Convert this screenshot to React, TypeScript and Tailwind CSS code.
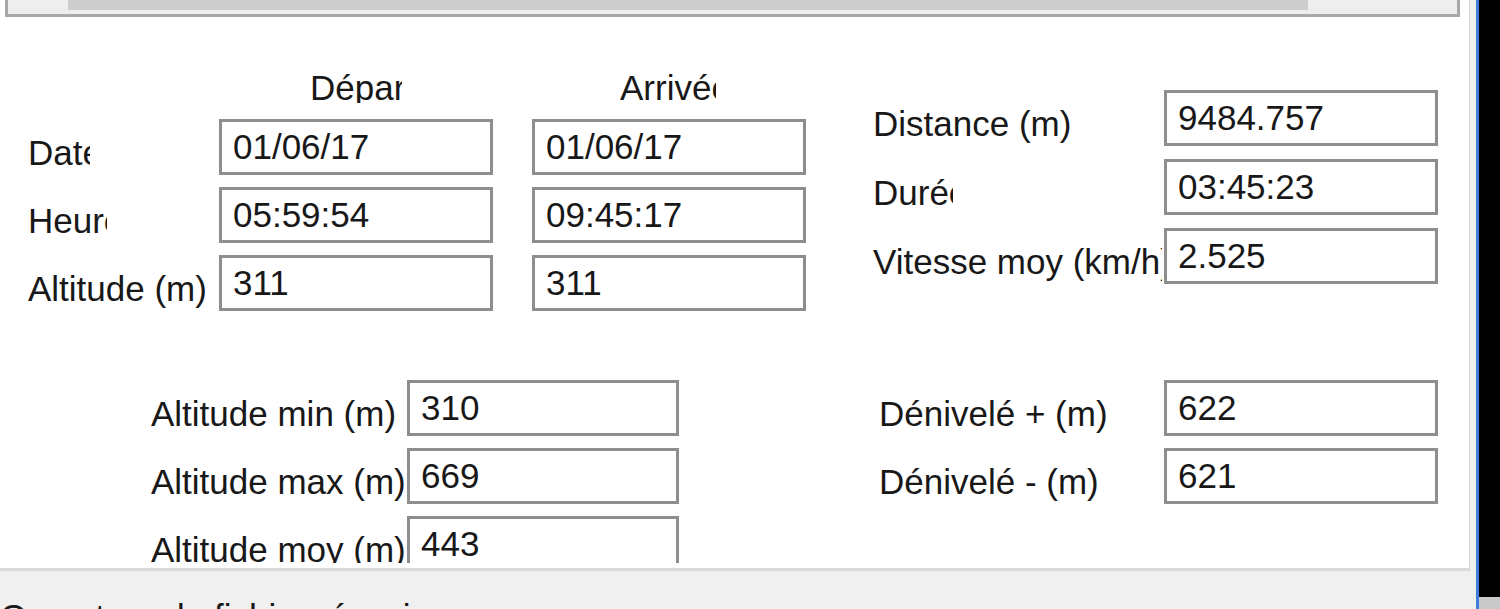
import React from "react";

const Box = ({ value, w = "w-[274px]" }: { value: string; w?: string }) => (
  <div className={`${w} h-[56px] shrink-0 border-[3px] border-[#8e8e8e] bg-white pl-[11px] pt-[5px] overflow-hidden whitespace-nowrap`}>
    {value}
  </div>
);

const Label = ({ text, slot, clip }: { text: string; slot: string; clip?: string }) => (
  <div className={`${slot} shrink-0 pt-[14px]`}>
    <div className={`${clip ?? "w-full"} overflow-hidden whitespace-nowrap`}>{text}</div>
  </div>
);

export default function App() {
  return (
    <div className="w-[1500px] h-[609px] overflow-hidden flex bg-black font-['Liberation_Sans',Arial,sans-serif] text-[35px] leading-[40px] text-[#181818]">
      <div className="w-[1476px] shrink-0 flex flex-col bg-[#f0f0f0]">
        {/* panel */}
        <div className="w-[1470px] h-[571px] shrink-0 bg-white border-r border-r-[#d8d8d8] border-b-[3px] border-b-[#d9d9d9]">
          <div className="h-[563px] overflow-hidden">
            {/* top scroll bar remnant */}
            <div className="ml-[5px] w-[1455px] h-[17px] border-x-[3px] border-b-[3px] border-[#a8a8a8] bg-[#eeeeee]">
              <div className="ml-[60px] w-[1240px] h-[10px] bg-[#cdcdcd]" />
            </div>

            {/* upper section */}
            <div className="flex items-start mt-[51px]">
              {/* left block */}
              <div className="ml-[28px] flex flex-col">
                <div className="h-[35px] overflow-hidden flex whitespace-nowrap">
                  <div className="w-[282px] shrink-0" />
                  <div className="w-[92px] shrink-0 overflow-hidden">Départ</div>
                  <div className="ml-[218px] w-[96px] shrink-0 overflow-hidden">Arrivée</div>
                </div>
                <div className="mt-[16px] flex flex-col gap-[12px]">
                  <div className="flex h-[56px]">
                    <Label text="Date" slot="w-[191px]" clip="w-[62px]" />
                    <Box value="01/06/17" />
                    <div className="w-[39px] shrink-0" />
                    <Box value="01/06/17" />
                  </div>
                  <div className="flex h-[56px]">
                    <Label text="Heure" slot="w-[191px]" clip="w-[79px]" />
                    <Box value="05:59:54" />
                    <div className="w-[39px] shrink-0" />
                    <Box value="09:45:17" />
                  </div>
                  <div className="flex h-[56px]">
                    <Label text="Altitude (m)" slot="w-[191px]" />
                    <Box value="311" />
                    <div className="w-[39px] shrink-0" />
                    <Box value="311" />
                  </div>
                </div>
              </div>

              {/* right block */}
              <div className="ml-[67px] mt-[22px] flex flex-col gap-[13px]">
                <div className="flex h-[56px]">
                  <Label text="Distance (m)" slot="w-[291px]" />
                  <Box value="9484.757" />
                </div>
                <div className="flex h-[56px]">
                  <Label text="Durée" slot="w-[291px]" clip="w-[80px]" />
                  <Box value="03:45:23" />
                </div>
                <div className="flex h-[56px]">
                  <Label text="Vitesse moy (km/h)" slot="w-[291px]" clip="w-[289px]" />
                  <Box value="2.525" />
                </div>
              </div>
            </div>

            {/* lower section */}
            <div className="flex items-start mt-[69px]">
              <div className="ml-[151px] flex flex-col gap-[12px]">
                <div className="flex h-[56px]">
                  <Label text="Altitude min (m)" slot="w-[256px]" />
                  <Box value="310" w="w-[272px]" />
                </div>
                <div className="flex h-[56px]">
                  <Label text="Altitude max (m)" slot="w-[256px]" />
                  <Box value="669" w="w-[272px]" />
                </div>
                <div className="flex h-[56px]">
                  <Label text="Altitude moy (m)" slot="w-[256px]" />
                  <Box value="443" w="w-[272px]" />
                </div>
              </div>
              <div className="ml-[200px] flex flex-col gap-[12px]">
                <div className="flex h-[56px]">
                  <Label text="Dénivelé + (m)" slot="w-[285px]" />
                  <Box value="622" />
                </div>
                <div className="flex h-[56px]">
                  <Label text="Dénivelé - (m)" slot="w-[285px]" />
                  <Box value="621" />
                </div>
              </div>
            </div>
          </div>
        </div>
        {/* status bar */}
        <div className="h-[38px] shrink-0 pt-[26px] whitespace-nowrap overflow-visible">
          Ouverture du fichier réussie
        </div>
      </div>
      <div className="w-[3px] shrink-0 bg-[#3f7fdc]" />
      <div className="flex-1 flex flex-col">
        <div className="flex-1 bg-black" />
        <div className="h-[12px] bg-[#c9c9c9]" />
      </div>
    </div>
  );
}
